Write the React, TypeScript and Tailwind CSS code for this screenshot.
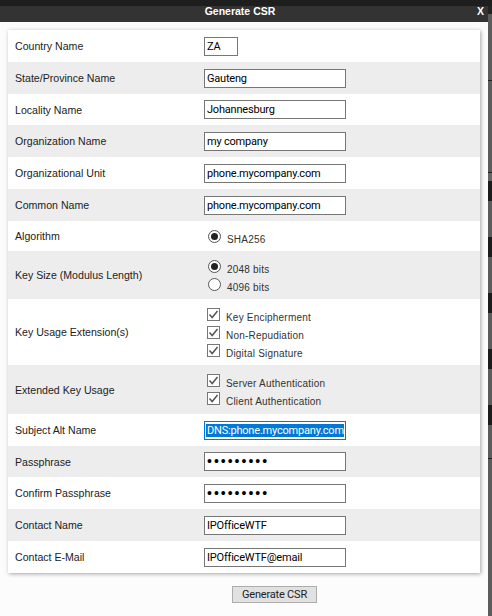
const font = "font-['Liberation_Sans',Arial,sans-serif]"
const inputText = "text-[11px] tracking-[-0.2px] font-['Roboto',sans-serif]"

function Field({ value, wide = true }: { value: string; wide?: boolean }) {
  return (
    <input
      readOnly
      type="text"
      defaultValue={value}
      className={`${wide ? "w-[142px]" : "w-[34px]"} h-[19px] block border border-[#767676] bg-white px-[2px] text-black outline-none ${inputText}`}
    />
  )
}

function PasswordField({ value }: { value: string }) {
  return (
    <input
      readOnly
      type="password"
      defaultValue={value}
      className="w-[142px] h-[19px] block border border-[#767676] bg-white px-[2px] text-black outline-none text-[14px] tracking-[2px] font-['Liberation_Sans',sans-serif]"
    />
  )
}

function SelectedField({ value }: { value: string }) {
  return (
    <div className="w-[142px] h-[19px] border border-[#0078d7] bg-white px-[1px] py-[2px] overflow-hidden">
      <span className={`block h-[13px] pl-[1px] whitespace-nowrap bg-[#0078d7] text-white leading-[13px] ${inputText}`}>
        {value}
      </span>
    </div>
  )
}

function Radio({ label, checked = false }: { label: string; checked?: boolean }) {
  return (
    <div className="flex h-[18px] items-center mt-[1px] -mb-[1px]">
      <span className="flex w-[13px] h-[13px] items-center justify-center rounded-full border border-[#555] bg-white ml-[4px] -mt-[2px]">
        {checked && <span className="w-[7px] h-[7px] rounded-full bg-[#222]" />}
      </span>
      <span className="ml-[6px] mt-[5px] text-[10px] text-[#333] tracking-[0.2px]">{label}</span>
    </div>
  )
}

function Check({ label }: { label: string }) {
  return (
    <div className="flex h-[18px] items-center mt-[1px] -mb-[1px]">
      <svg width="13" height="13" viewBox="0 0 13 13" className="ml-[3px] -mt-[2px] shrink-0">
        <rect x="0.5" y="0.5" width="12" height="12" fill="#fff" stroke="#777" />
        <path d="M2.5 6.5 L5.2 9.5 L10.5 3" fill="none" stroke="#555" strokeWidth="1.5" />
      </svg>
      <span className="ml-[6px] mt-[3px] text-[10px] text-[#333] tracking-[0.2px]">{label}</span>
    </div>
  )
}

function Row({ label, h, shaded, children }: { label: string; h: string; shaded?: boolean; children: React.ReactNode }) {
  return (
    <div className={`flex items-center ${h} ${shaded ? "bg-[#ededed]" : "bg-white"}`}>
      <div className="w-[196px] pl-[7px] pt-[2px] text-[10.6px] text-[#222]">{label}</div>
      <div>{children}</div>
    </div>
  )
}

// the page behind the dialog, only a thin strip of it shows on the right
function BackStrip() {
  return (
    <div className="w-[4px] flex flex-col bg-[#5c5c5c]">
      <div className="h-[8px] bg-[#222]" />
      <div className="h-[66px]" />
      <div className="h-px bg-[#222]" />
      <div className="h-[91px]" />
      <div className="h-px bg-[#222]" />
      <div className="h-[8px] bg-[#666]" />
      <div className="h-[20px] bg-[#1c1c1c]" />
      <div className="h-[36px]" />
      <div className="h-[20px] bg-[#1c1c1c]" />
      <div className="h-[36px]" />
      <div className="h-[20px] bg-[#1c1c1c]" />
      <div className="h-[36px]" />
      <div className="h-[20px] bg-[#1c1c1c]" />
      <div className="h-[36px]" />
      <div className="h-[20px] bg-[#1c1c1c]" />
      <div className="h-[33px]" />
      <div className="h-px bg-[#222]" />
    </div>
  )
}

export default function App() {
  return (
    <div className={`w-[492px] h-[616px] overflow-hidden flex flex-col bg-[#1e1e1e] ${font}`}>
      <div className="h-[6px] shrink-0" />
      <div className="flex flex-1 min-h-0">
        <div className="w-[488px] flex flex-col bg-[#fcfcfc]">
          <div className="relative h-[16px] pr-[8px] bg-[#333] text-center text-[10.5px] leading-[11px] font-bold text-white shrink-0">
            Generate CSR
            <span className="absolute right-[4px] top-0 text-[10.5px]">X</span>
          </div>
          <div className="mx-[8px] mt-[8px] shadow-[1px_1px_4px_rgba(0,0,0,0.35)]">
            <Row label="Country Name" h="h-[32px]"><Field value="ZA" wide={false} /></Row>
            <Row label="State/Province Name" h="h-[32px]" shaded><Field value="Gauteng" /></Row>
            <Row label="Locality Name" h="h-[31px]"><Field value="Johannesburg" /></Row>
            <Row label="Organization Name" h="h-[32px]" shaded><Field value="my company" /></Row>
            <Row label="Organizational Unit" h="h-[32px]"><Field value="phone.mycompany.com" /></Row>
            <Row label="Common Name" h="h-[32px]" shaded><Field value="phone.mycompany.com" /></Row>
            <Row label="Algorithm" h="h-[30px]"><Radio label="SHA256" checked /></Row>
            <Row label="Key Size (Modulus Length)" h="h-[48px]" shaded>
              <Radio label="2048 bits" checked />
              <Radio label="4096 bits" />
            </Row>
            <Row label="Key Usage Extension(s)" h="h-[66px]">
              <div className="mt-[2px]">
                <Check label="Key Encipherment" />
                <Check label="Non-Repudiation" />
                <Check label="Digital Signature" />
              </div>
            </Row>
            <Row label="Extended Key Usage" h="h-[49px]" shaded>
              <Check label="Server Authentication" />
              <Check label="Client Authentication" />
            </Row>
            <Row label="Subject Alt Name" h="h-[32px]"><SelectedField value="DNS:phone.mycompany.com" /></Row>
            <Row label="Passphrase" h="h-[31px]" shaded><PasswordField value="123456789" /></Row>
            <Row label="Confirm Passphrase" h="h-[32px]"><PasswordField value="123456789" /></Row>
            <Row label="Contact Name" h="h-[32px]" shaded><Field value="IPOfficeWTF" /></Row>
            <Row label="Contact E-Mail" h="h-[32px]"><Field value="IPOfficeWTF@email" /></Row>
          </div>
          <div className="mt-[13px] pl-[232px] flex">
            <button className={`w-[85px] h-[17px] border border-[#adadad] bg-[#e1e1e1] leading-[14px] text-[#222] ${inputText}`}>
              Generate CSR
            </button>
          </div>
        </div>
        <BackStrip />
      </div>
    </div>
  )
}
